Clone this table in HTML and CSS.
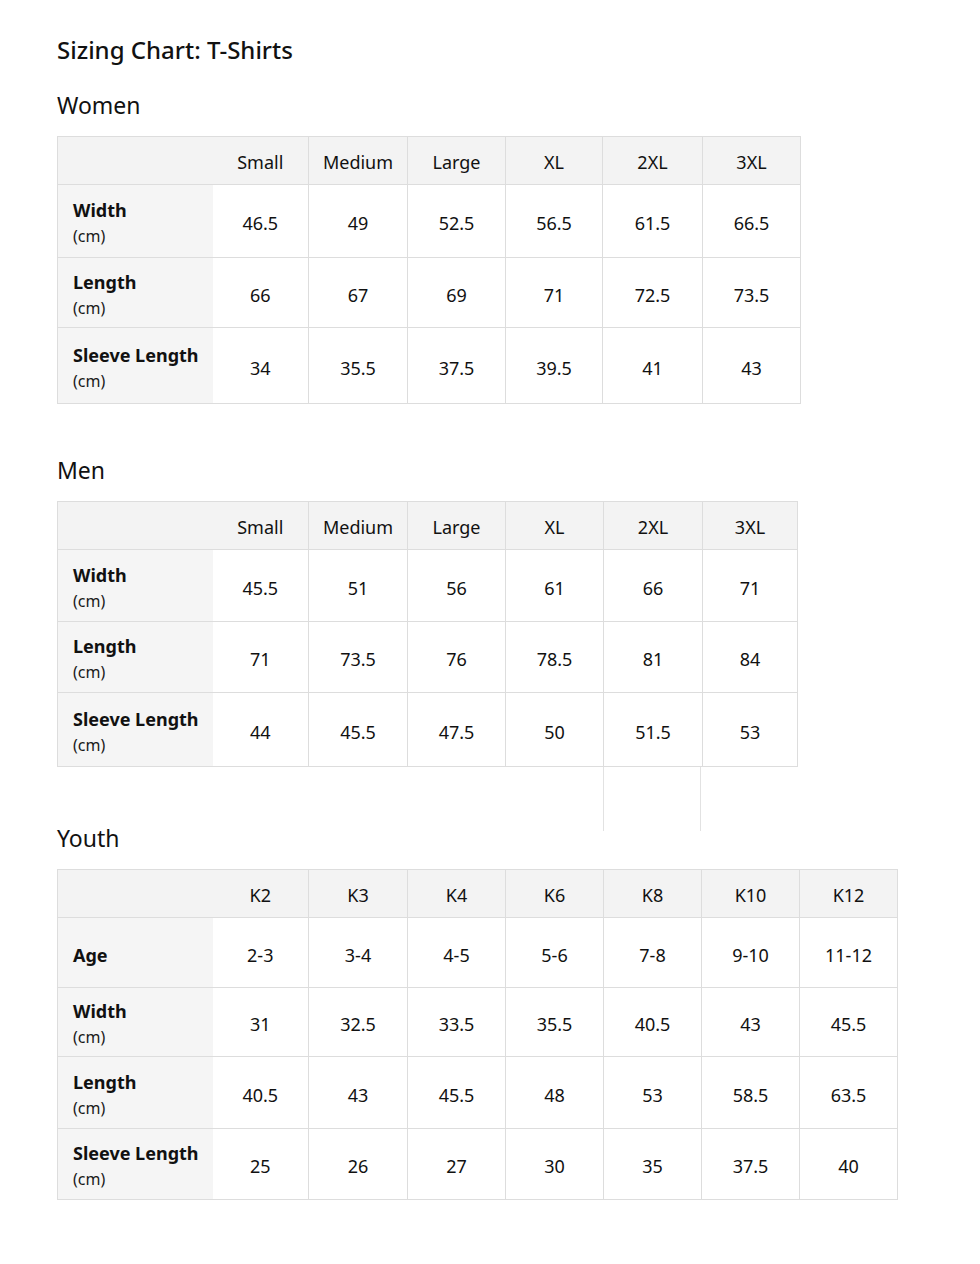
FILE: index.html
```html
<!DOCTYPE html>
<html lang="en">
<head>
<meta charset="utf-8">
<title>Sizing Chart: T-Shirts</title>
<link rel="stylesheet" href="styles.css">
</head>
<body>
<main class="page">
  <h1 class="title">Sizing Chart: T-Shirts</h1>

  <h2 class="section women-h">Women</h2>
  <table class="chart women">
    <colgroup>
      <col class="c-label"><col class="c-a"><col class="c-b"><col class="c-c"><col class="c-d"><col class="c-e"><col class="c-f">
    </colgroup>
    <thead>
      <tr><th class="corner"></th><th>Small</th><th>Medium</th><th>Large</th><th>XL</th><th>2XL</th><th>3XL</th></tr>
    </thead>
    <tbody>
      <tr><th class="label"><b>Width</b><span class="unit">(cm)</span></th><td>46.5</td><td>49</td><td>52.5</td><td>56.5</td><td>61.5</td><td>66.5</td></tr>
      <tr><th class="label"><b>Length</b><span class="unit">(cm)</span></th><td>66</td><td>67</td><td>69</td><td>71</td><td>72.5</td><td>73.5</td></tr>
      <tr><th class="label"><b>Sleeve Length</b><span class="unit">(cm)</span></th><td>34</td><td>35.5</td><td>37.5</td><td>39.5</td><td>41</td><td>43</td></tr>
    </tbody>
  </table>

  <h2 class="section men-h">Men</h2>
  <table class="chart men">
    <colgroup>
      <col class="c-label"><col class="c-a"><col class="c-b"><col class="c-c"><col class="c-d"><col class="c-e"><col class="c-f">
    </colgroup>
    <thead>
      <tr><th class="corner"></th><th>Small</th><th>Medium</th><th>Large</th><th>XL</th><th>2XL</th><th>3XL</th></tr>
    </thead>
    <tbody>
      <tr><th class="label"><b>Width</b><span class="unit">(cm)</span></th><td>45.5</td><td>51</td><td>56</td><td>61</td><td>66</td><td>71</td></tr>
      <tr><th class="label"><b>Length</b><span class="unit">(cm)</span></th><td>71</td><td>73.5</td><td>76</td><td>78.5</td><td>81</td><td>84</td></tr>
      <tr><th class="label"><b>Sleeve Length</b><span class="unit">(cm)</span></th><td>44</td><td>45.5</td><td>47.5</td><td>50</td><td>51.5</td><td>53</td></tr>
    </tbody>
  </table>
  <div class="stray"><div class="stray-lines"></div></div>

  <h2 class="section youth-h">Youth</h2>
  <table class="chart youth">
    <colgroup>
      <col class="c-label"><col class="c-a"><col class="c-b"><col class="c-c"><col class="c-d"><col class="c-e"><col class="c-f"><col class="c-g">
    </colgroup>
    <thead>
      <tr><th class="corner"></th><th>K2</th><th>K3</th><th>K4</th><th>K6</th><th>K8</th><th>K10</th><th>K12</th></tr>
    </thead>
    <tbody>
      <tr><th class="label"><b>Age</b></th><td>2-3</td><td>3-4</td><td>4-5</td><td>5-6</td><td>7-8</td><td>9-10</td><td>11-12</td></tr>
      <tr><th class="label"><b>Width</b><span class="unit">(cm)</span></th><td>31</td><td>32.5</td><td>33.5</td><td>35.5</td><td>40.5</td><td>43</td><td>45.5</td></tr>
      <tr><th class="label"><b>Length</b><span class="unit">(cm)</span></th><td>40.5</td><td>43</td><td>45.5</td><td>48</td><td>53</td><td>58.5</td><td>63.5</td></tr>
      <tr><th class="label"><b>Sleeve Length</b><span class="unit">(cm)</span></th><td>25</td><td>26</td><td>27</td><td>30</td><td>35</td><td>37.5</td><td>40</td></tr>
    </tbody>
  </table>
</main>
</body>
</html>
```

FILE: styles.css
```css
html, body {
  margin: 0;
  padding: 0;
  background: #ffffff;
}

body {
  font-family: "Noto Sans", "Open Sans", "Liberation Sans", sans-serif;
  color: #111111;
}

.page {
  padding: 34px 0 40px 57px;
}

.title {
  margin: 0;
  font-size: 24px;
  line-height: 32px;
  font-weight: 500;
}

.section {
  margin: 0;
  font-size: 23px;
  line-height: 30px;
  font-weight: 400;
}

.women-h { margin-top: 24px; }
.men-h { margin-top: 51px; }
.youth-h { margin-top: -8px; }

.chart {
  border-collapse: collapse;
  table-layout: fixed;
  margin-top: 16px;
  font-size: 18px;
}

.chart th,
.chart td {
  border: 1px solid #dddddd;
  text-align: center;
  vertical-align: middle;
  padding: 0;
  font-weight: 400;
}

.chart thead th {
  background: #f3f3f3;
  height: 45px;
  padding-top: 2px;
}

.chart thead th.corner {
  border-right: none;
}

.chart thead th:nth-child(2) {
  border-left: none;
}

.chart tbody td:nth-child(2) {
  border-left: none;
}

.chart .label {
  background: #f5f5f5;
  text-align: left;
  padding-left: 15px;
  border-right: none;
  line-height: 26px;
  padding-top: 4px;
}

.chart .label b {
  display: block;
  font-weight: 700;
}

.chart .unit {
  display: block;
  font-size: 16px;
  color: #1a1a1a;
}

.chart td {
  padding-top: 4px;
}

/* column widths */
.c-label { width: 155px; }
.c-a { width: 96px; }
.c-b { width: 99px; }
.c-c { width: 98px; }
.c-d { width: 97px; }
.c-e { width: 100px; }
.c-f { width: 98px; }
.c-g { width: 98px; }

.women { width: 744px; }
.men { width: 741px; }
.men .c-d { width: 98px; }
.men .c-e { width: 99px; }
.men .c-f { width: 95px; }

.youth { width: 841px; }
.youth .c-d { width: 98px; }
.youth .c-e { width: 98px; }

/* row heights */
.women tbody tr:nth-child(1) th, .women tbody tr:nth-child(1) td { height: 68px; }
.women tbody tr:nth-child(2) th, .women tbody tr:nth-child(2) td { height: 65px; }
.women tbody tr:nth-child(3) th, .women tbody tr:nth-child(3) td { height: 71px; }

.men tbody tr:nth-child(1) th, .men tbody tr:nth-child(1) td { height: 67px; }
.men tbody tr:nth-child(2) th, .men tbody tr:nth-child(2) td { height: 66px; }
.men tbody tr:nth-child(3) th, .men tbody tr:nth-child(3) td { height: 69px; }

.youth tbody tr:nth-child(1) th, .youth tbody tr:nth-child(1) td { height: 65px; }
.youth tbody tr:nth-child(2) th, .youth tbody tr:nth-child(2) td { height: 64px; }
.youth tbody tr:nth-child(3) th, .youth tbody tr:nth-child(3) td { height: 67px; }
.youth tbody tr:nth-child(4) th, .youth tbody tr:nth-child(4) td { height: 66px; }

/* faint leftover grid lines under the Men chart */
.stray {
  height: 64px;
}

.stray-lines {
  margin-left: 546px;
  width: 98px;
  height: 64px;
  border-left: 1px solid #e2e2e2;
  border-right: 1px solid #e2e2e2;
  box-sizing: border-box;
}
```
